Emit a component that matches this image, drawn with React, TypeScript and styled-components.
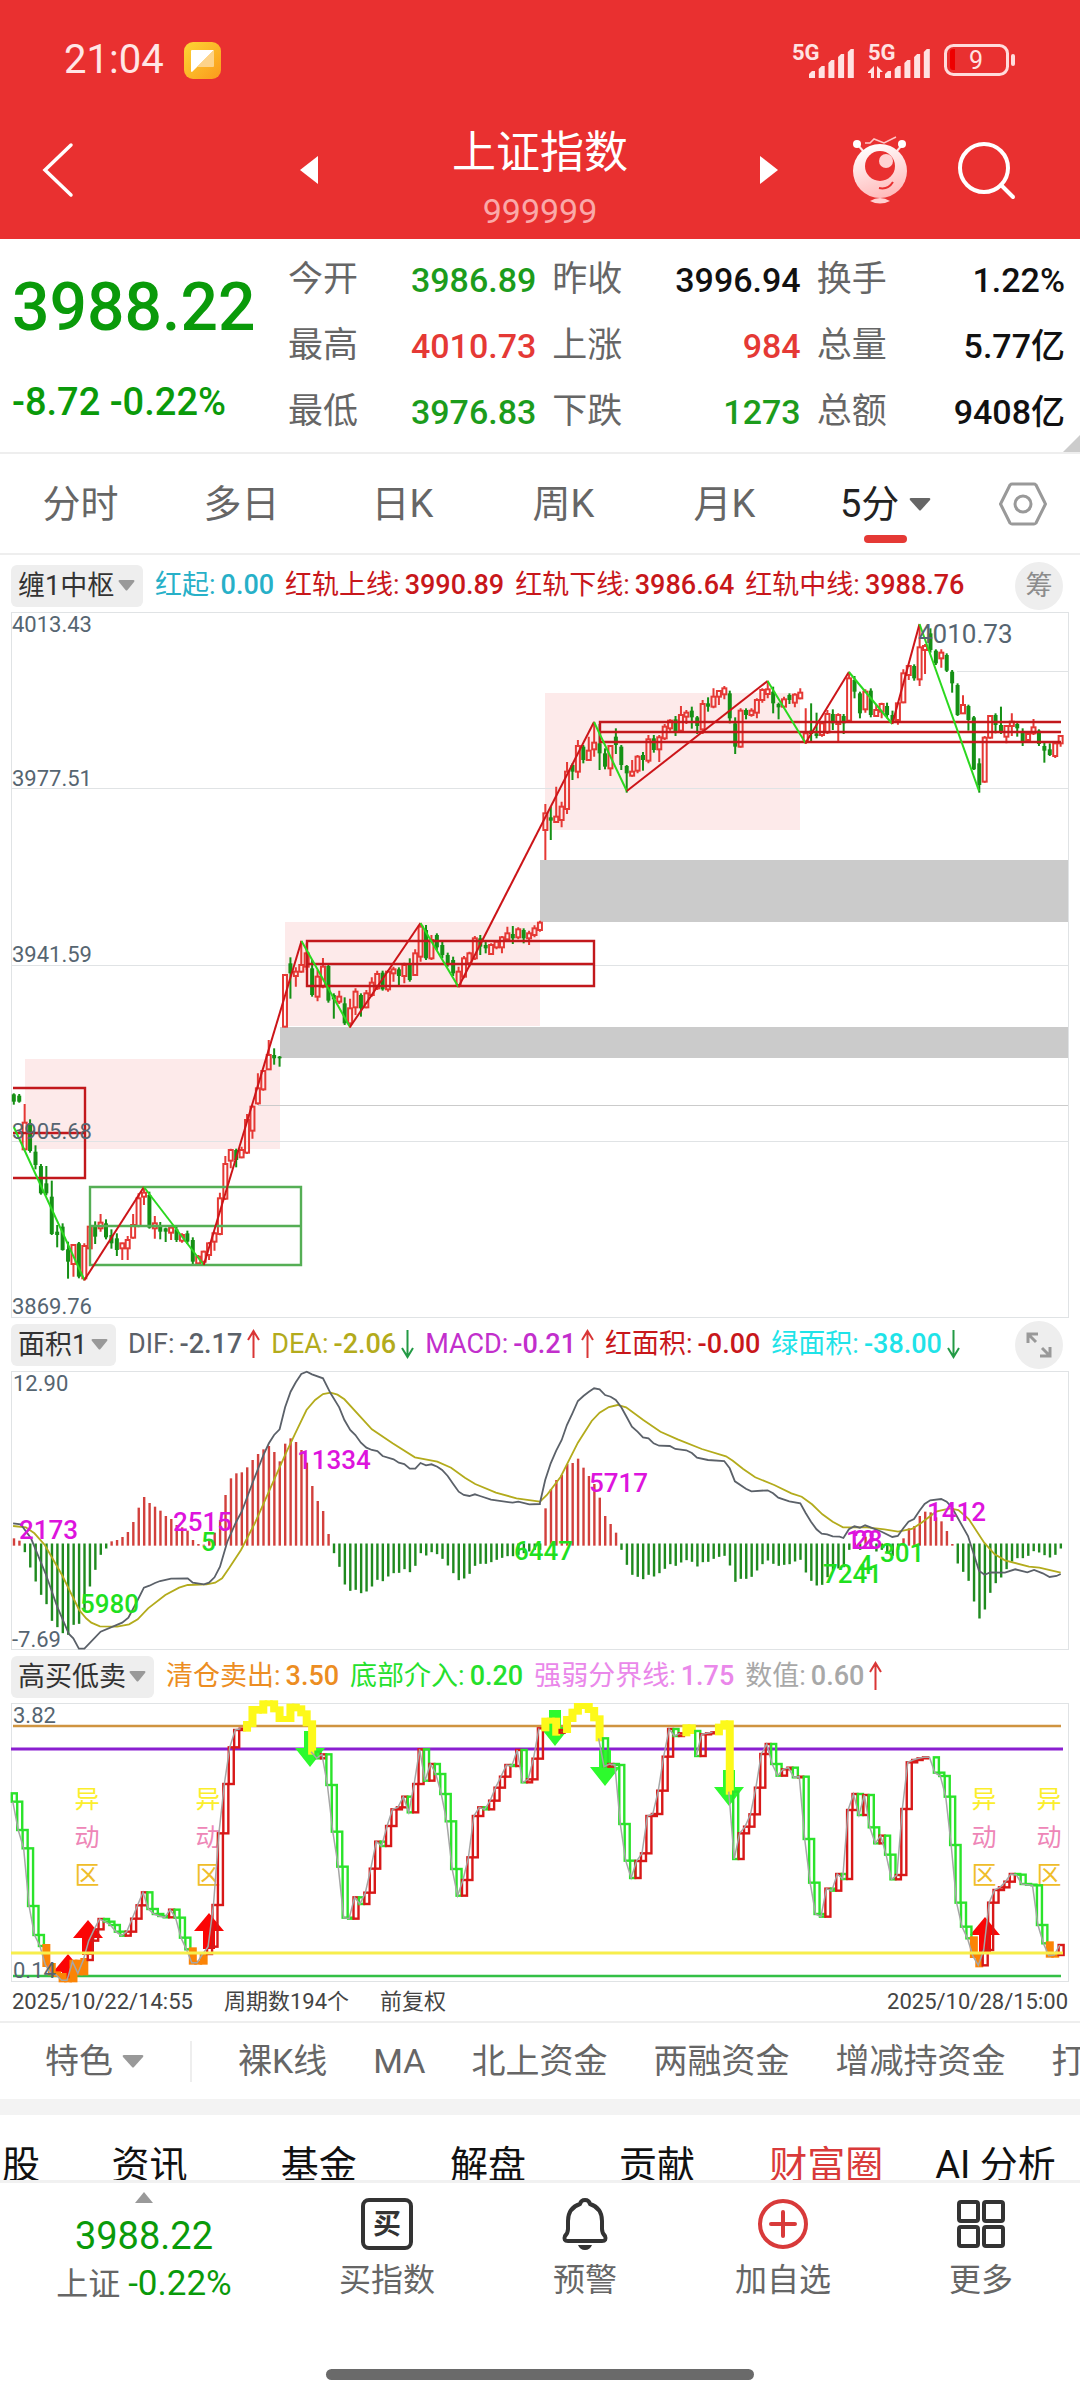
import React from "react";
import styled, { createGlobalStyle } from "styled-components";

const GlobalStyle = createGlobalStyle`
  * { box-sizing: border-box; }
  body {
    margin: 0;
    background: #fff;
    color: #666;
    font-family: Roboto, "Noto Sans CJK SC", sans-serif;
  }
  button, select {
    margin: 0;
    padding: 0;
    border: 0;
    background: none;
    color: inherit;
    font: inherit;
    line-height: inherit;
  }
  svg { display: block; flex: none; }
`;

const RED = "#e93030";
const UP = "#e53935";
const DOWN = "#159015";
const GREEN = "#0a9a0a";

/* ---------- layout ---------- */

const Page = styled.div`
  display: flex;
  flex-direction: column;
  min-height: 100vh;
  overflow-x: hidden;
`;

const Top = styled.header`
  background: ${RED};
  color: #fff;
`;

const StatusBar = styled.div`
  display: flex;
  align-items: center;
  justify-content: space-between;
  height: 92px;
  padding: 28px 64px 0;
`;

const StatusGroup = styled.div<{ $gap: number }>`
  display: flex;
  align-items: center;
  gap: ${(p) => p.$gap}px;
`;

const Clock = styled.span`
  font-size: 40px;
  line-height: 48px;
  color: #ffe6e6;
`;

const TitleBar = styled.div`
  display: grid;
  grid-template-columns: 1fr auto 1fr;
  align-items: center;
  height: 147px;
  padding: 8px 40px 0;
`;

const TitleSide = styled.div<{ $right?: boolean }>`
  display: flex;
  align-items: center;
  justify-content: space-between;
  padding-left: ${(p) => (p.$right ? "132px" : "0")};
  padding-right: ${(p) => (p.$right ? "24px" : "134px")};
`;

const TitleText = styled.div`
  display: flex;
  flex-direction: column;
  align-items: center;
  align-self: end;
`;

const Name = styled.h1`
  margin: 0;
  font-size: 44px;
  font-weight: 400;
  line-height: 60px;
`;

const Code = styled.span`
  font-size: 34px;
  line-height: 56px;
  color: #faa9a9;
`;

const IconButton = styled.button`
  display: flex;
  align-items: center;
  justify-content: center;
`;

const Actions = styled.div`
  display: flex;
  align-items: center;
  gap: 48px;
`;

const Quote = styled.section`
  position: relative;
  display: flex;
  height: 215px;
  padding: 8px 15px 0 12px;
  border-bottom: 2px solid #eee;
`;

const Corner = styled.svg`
  position: absolute;
  right: 0;
  bottom: 0;
`;

const Price = styled.div`
  flex: 0 0 276px;
  display: flex;
  flex-direction: column;
  color: ${GREEN};
  font-weight: 500;
`;

const Last = styled.strong`
  font-size: 66px;
  font-weight: 500;
  line-height: 122px;
`;

const Change = styled.span`
  font-size: 38px;
  line-height: 66px;
`;

const Stats = styled.dl`
  flex: 1;
  display: grid;
  grid-template-columns: repeat(3, 1fr);
  grid-auto-rows: 66px;
  column-gap: 16px;
  margin: 0;
`;

const Stat = styled.div`
  display: flex;
  justify-content: space-between;
  align-items: center;
  line-height: 66px;
`;

const StatName = styled.dt`
  font-size: 35px;
`;

const StatValue = styled.dd<{ $color: string }>`
  margin: 0;
  font-size: 34px;
  font-weight: 500;
  color: ${(p) => p.$color};
`;

const Periods = styled.nav`
  display: grid;
  grid-template-columns: repeat(5, 161px) 1fr 114px;
  align-items: stretch;
  height: 101px;
  border-bottom: 2px solid #eee;
  font-size: 38px;
  line-height: 48px;
`;

const Period = styled.button``;

const ActivePeriod = styled.div`
  display: flex;
  flex-direction: column;
  align-items: center;
  padding-top: 26px;
  color: #222;
`;

const Underline = styled.span`
  width: 43px;
  height: 8px;
  margin-top: 7px;
  border-radius: 4px;
  background: ${UP};
`;

const PickerBox = styled.label<{ $pill?: boolean }>`
  position: relative;
  display: inline-flex;
  align-items: center;
  height: ${(p) => (p.$pill ? "42px" : "48px")};
  padding-left: ${(p) => (p.$pill ? "7px" : "0")};
  border-radius: 6px;
  background: ${(p) => (p.$pill ? "#eee" : "none")};
`;

const PickerSelect = styled.select<{ $pill?: boolean }>`
  appearance: none;
  outline: none;
  padding-right: ${(p) => (p.$pill ? "28px" : "31px")};
  color: inherit;
`;

const PickerCaret = styled.svg<{ $pill?: boolean }>`
  position: absolute;
  right: ${(p) => (p.$pill ? "8px" : "0")};
  top: 0;
  bottom: 0;
  margin: auto 0;
  pointer-events: none;
`;

const IndicatorBar = styled.div<{ $first?: boolean }>`
  display: flex;
  align-items: center;
  height: ${(p) => (p.$first ? "57px" : "53px")};
  padding: ${(p) => (p.$first ? "4px 17px 0 11px" : "0 17px 0 11px")};
  font-size: 27px;
  line-height: 40px;
  color: #333;
`;

const Legend = styled.div`
  flex: 1;
  display: flex;
  gap: 11px;
  padding: 0 0 2px 12px;
  white-space: nowrap;
`;

const LegendItem = styled.span<{ $color: string }>`
  display: flex;
  align-items: center;
  gap: 5px;
  color: ${(p) => p.$color};
`;

const LegendValue = styled.span`
  font-weight: 500;
`;

const RoundButton = styled.button`
  display: flex;
  align-items: center;
  justify-content: center;
  width: 48px;
  height: 48px;
  border-radius: 50%;
  background: #eee;
  color: #8c8c8c;
`;

const Plot = styled.svg`
  width: calc(100% - 22px);
  height: auto;
  margin: 0 11px;
  overflow: visible;
  font-family: Roboto, "Noto Sans CJK SC", sans-serif;
`;

const DateRow = styled.div`
  display: flex;
  gap: 31px;
  height: 41px;
  padding: 0 12px;
  border-bottom: 2px solid #eee;
  font-size: 22px;
  line-height: 40px;
  color: #444;
`;

const EndDate = styled.time`
  margin-left: auto;
`;

const Features = styled.nav`
  display: flex;
  align-items: center;
  gap: 46px;
  height: 76px;
  padding-left: 45px;
  overflow: hidden;
  font-size: 34px;
  line-height: 48px;
  white-space: nowrap;
`;

const Divider = styled.span`
  flex: none;
  width: 2px;
  height: 41px;
  background: #eee;
`;

const Band = styled.div`
  height: 16px;
  background: #f3f3f3;
`;

const NewsTabs = styled.nav`
  display: grid;
  grid-template-columns: 65px repeat(6, 1fr);
  align-items: start;
  height: 68px;
  padding-top: 22px;
  overflow: hidden;
  border-bottom: 3px solid #f1f1f1;
  font-size: 38px;
  line-height: 56px;
  color: #111;
`;

const NewsTab = styled.button<{ $active?: boolean; $cut?: boolean }>`
  padding-left: ${(p) => (p.$cut ? "2px" : "0")};
  color: ${(p) => (p.$active ? "#d93a3a" : "inherit")};
  text-align: ${(p) => (p.$cut ? "left" : "center")};
  white-space: nowrap;
`;

const BottomBar = styled.footer`
  display: grid;
  grid-template-columns: 288fr repeat(4, 198fr);
  height: 130px;
  font-size: 32px;
  line-height: 40px;
`;

const IndexTicker = styled.button`
  display: flex;
  flex-direction: column;
  align-items: center;
  padding-top: 9px;
`;

const TickerPrice = styled.span`
  margin-top: 9px;
  font-size: 38px;
  line-height: 48px;
  color: ${GREEN};
`;

const TickerChange = styled.span`
  line-height: 48px;
`;

const Percent = styled.span`
  font-size: 35px;
  color: ${GREEN};
`;

const Action = styled.button`
  display: flex;
  flex-direction: column;
  align-items: center;
  gap: 10px;
  padding-top: 15px;
`;

const HomeIndicator = styled.div`
  width: 428px;
  height: 11px;
  margin: auto auto 20px;
  border-radius: 6px;
  background: #6a6a6a;
`;

/* ---------- chart data ---------- */

const sx = (i: number) => 13.8 + 5.424 * i;

type Candle = [string, number, number, number, number];

const parseCandles = (src: string, base: number): Candle[] =>
  src
    .trim()
    .split(/\s*,\s*/)
    .map((row) => {
      const [c, ...n] = row.split(" ");
      const [a, b, d, e] = n.map((v) => base + Number(v) / 3);
      return [c, a, b, d, e];
    });

/* colour, high, body top, body bottom, low */
const candles: Candle[] = [
  ...parseCandles(
    `g 400 403 425 434,g 402 407 425 428,r 432 488 568 570,g 478 490 573 578,g 556 575 615 628,g 612 618 700 704,
g 618 670 700 706,g 662 710 822 825,g 795 815 825 862,g 790 800 870 872,g 845 868 905 956,r 852 855 912 950,
g 846 850 950 955,r 850 858 955 962,r 800 800 865 868,g 784 800 830 852,r 762 788 805 815,g 778 790 832 838,
g 808 825 850 866,g 820 835 870 888,r 848 850 865 900,r 828 840 865 900,r 762 795 833 836,r 700 715 798 802,
r 682 698 710 735,g 695 705 803 806,r 768 790 805 836,g 786 795 815 838,g 803 805 815 846,r 798 803 818 840,
g 800 808 840 846,r 820 825 842 848,g 812 820 845 852,g 832 840 905 912,r 885 890 910 912,r 872 875 905 918,
r 846 850 885 900,r 815 820 845 872,r 698 715 822 826,r 588 612 716 720,r 566 570 602 625,g 566 570 600 622,
r 560 570 592 595,r 462 480 578 582,r 436 440 512 536,r 340 385 430 434,r 330 333 388 392,r 240 285 328 330,
g 265 285 295 314,g 288 290 295 320,r 42 45 200 202,g -8 10 40 116,r 22 35 48 80,r -58 15 35 38,
r -50 -20 20 30,g 0 25 105 110,r 30 50 110 124,r -6 20 80 85,g 12 18 122 128,g 100 105 118 176,
r 92 110 125 132,g 112 130 190 195,r 116 145 190 204,r 85 95 142 165,g 100 105 145 170,r 90 100 142 145,
r 52 68 105 110,r 32 42 85 90,g 32 38 88 92,r 30 35 88 95,r 20 28 40 65,g 22 28 48 76,
r 8 15 48 70,g -5 10 60 65,r -32 -20 45 48,r -110 -100 -10 5,g -105 -90 -5 0,r -75 -60 -5 0,
g -80 -75 -38 -30,g -55 -45 -15 -5,g -22 -15 10 20,g -10 0 40 48,r 20 35 75 82,r -12 -5 50 55,
r -25 -20 10 20,r -72 -65 -5 0,g -75 -65 -40 -15,g -60 -45 -35 -20,r -50 -45 -18 -15,r -60 -55 -38 -32,
r -72 -68 -38 -20,r -100 -80 -62 -55,g -102 -78 -65 -48,r -98 -92 -68 -62,g -95 -90 -65 -50,r -88 -80 -65 -45,
r -104 -95 -75 -68,r -118 -112 -90 -85`,
    960
  ),
  ...parseCandles(
    `r 612 640 690 780,g 620 652 662 720,r 560 650 666 668,r 605 620 660 682,r 486 515 627 642,g 490 495 515 540,
r 420 438 515 535,g 435 440 480 490,r 410 452 480 482,r 365 428 448 470,g 372 430 460 510,g 445 460 500 508,
r 435 438 505 528,g 385 410 435 462,g 435 440 495 510,g 495 498 520 578,r 480 515 527 530,r 465 470 512 520,
g 456 465 480 512,r 405 418 482 490,g 405 415 450 458,r 405 412 448 486,r 372 380 415 420,r 358 362 385 392,
g 348 358 395 408,r 318 345 392 398,r 330 338 350 372,g 320 332 352 386,g 348 352 378 402,r 300 312 388 402,
g 292 310 320 335,r 265 290 320 325,r 270 273 290 315,r 258 265 283 298,g 272 280 355 370,g 352 370 440 462,
r 325 332 440 443,g 325 330 345 358,r 325 332 345 350,r 295 300 338 355,r 265 270 300 308,r 242 268 282 295,
g 260 275 310 340,g 308 312 322 358,r 290 298 320 325,g 280 285 300 312,r 280 284 308 322,r 265 278 295 298,
r 325 400 425 432,g 310 392 402 425,g 338 400 408 415,r 365 370 405 410,r 330 342 397 402,g 328 342 370 390,
r 340 345 372 425,g 342 348 370 402,r 215 235 362 365,g 228 240 275 295,g 275 280 340 355,r 268 275 328 338,
g 265 272 345 352,r 315 330 348 350,r 308 312 335 355,g 308 318 345 355,g 332 345 362 370,r 308 310 360 374,
r 208 220 307 310,r 195 198 225 240,g 193 198 235 242,r 75 142 238 258,r 132 138 150 222,g 85 100 150 158,
g 148 152 190 195,r 148 158 175 203,g 160 165 212 216,g 210 215 250 278,g 250 255 345 348,r 286 315 340 342,
g 314 318 360 392,g 348 352 508 510,g 475 490 555 578,r 408 413 545 548,r 345 348 413 416,g 340 345 375 400,
g 320 375 395 402,r 375 378 410 430,r 340 365 378 408,g 365 372 385 410,g 385 395 425 438,r 398 402 420 425,
r 357 382 400 405,g 388 392 432 438,g 428 438 452 488,g 430 448 465 468,r 428 430 468 474,r 405 408 430 440`,
    600
  ),
];

const zigzag: [number, number][] = [
  [13.8, 1127], [84.4, 1280], [143.9, 1187], [203.8, 1265], [301.5, 941], [350, 1027],
  [420.5, 923], [458.5, 987], [594, 722], [626.8, 791], [767.6, 681], [805.5, 743],
  [848.9, 672], [892.3, 724], [919.5, 624], [979, 791],
];

/* bar tips; anything past 672 hangs below the zero line */
const macd =
  `655 662 697 743 785 825 853 903 922 940 945 915 912 870 800 750 705 686 664 660 651 636 606 563 531 549 560 572 588 597
615 622 632 660 672 674 663 638 600 525 475 460 457 442 420 402 388 378 396 424 371 355 366 390 428 498 543 573 642 700
741 794 813 810 820 815 800 780 784 770 760 759 748 757 738 700 707 697 703 717 737 760 781 776 762 738 732 732 727 720
714 709 709 705 700 695 690 690 565 507 480 465 432 429 416 443 468 492 533 588 612 638 690 735 765 771 778 765 770 760
747 733 738 728 721 726 740 727 726 717 711 708 737 786 777 777 771 752 733 722 732 738 735 733 725 720 758 783 797 795
772 751 746 742 690 668 690 650 686 695 690 700 708 690 655 625 618 588 575 577 592 604 633 672 731 756 783 845 896 869
819 790 773 748 725 715 715 708 694 698 706 713 705 686`
    .split(/\s+/)
    .map(Number);

const trace = (left: string, right: string) => {
  const conv = (s: string, ox: number) =>
    s.split(" ").map((p) => {
      const [x, y] = p.split(",").map(Number);
      return `${(ox + x / 2.904).toFixed(1)},${(1320 + y / 3).toFixed(1)}`;
    });
  return [...conv(left, 0), ...conv(right, 540)].join(" ");
};

const dif = trace(
  "38,610 60,613 90,655 134,765 166,860 200,942 213,955 229,986 245,986 292,935 355,908 373,893 400,840 418,803 434,797 450,789 465,783 497,776 545,775 560,788 592,793 607,788 623,772 639,740 660,665 686,605 702,575 733,490 765,405 781,370 796,345 812,328 828,262 844,215 859,187 875,162 891,155 906,163 938,175 960,220 985,262 1000,300 1017,330 1032,345 1048,368 1064,383 1080,390 1096,393 1111,408 1143,418 1158,428 1174,432 1190,446 1206,446 1221,429 1237,436 1253,433 1270,440 1284,450 1300,468 1316,492 1332,515 1347,525 1363,528 1379,523 1394,528 1426,539 1489,548 1505,545 1537,553 1568,552",
  "0,548 15,480 31,430 47,392 63,360 78,315 94,280 110,243 126,228 142,215 157,205 173,208 189,225 205,230 220,240 236,262 252,292 267,320 283,335 299,352 315,355 330,370 346,377 377,378 393,387 425,391 441,399 456,413 488,420 535,423 551,445 566,484 598,506 614,514 661,511 677,520 692,533 724,544 756,550 771,578 787,605 803,628 818,641 834,643 850,649 870,650 881,654 897,628 913,619 929,623 944,616 960,622 992,635 1023,651 1039,648 1055,625 1070,605 1086,597 1102,572 1117,552 1133,541 1165,537 1181,545 1196,562 1212,592 1243,648 1259,700 1275,752 1291,764 1307,757 1350,758 1380,748 1415,757 1435,750 1460,760 1480,771 1500,768 1512,762"
);

const dea = trace(
  "38,618 75,622 100,640 130,675 180,765 230,870 250,895 265,908 290,919 340,920 375,913 400,898 430,865 480,825 520,803 545,795 600,793 625,788 645,775 665,745 700,690 740,610 800,470 830,400 860,335 890,270 915,240 938,222 960,218 980,224 1000,238 1080,328 1140,370 1205,412 1270,425 1310,443 1350,473 1380,492 1440,518 1500,535 1568,545",
  "0,545 20,525 60,470 110,368 150,303 173,278 200,261 225,255 250,262 300,300 350,335 400,358 470,387 540,409 560,422 590,447 625,472 680,495 730,520 760,530 790,553 820,583 850,605 880,622 950,622 1000,628 1040,635 1080,627 1110,607 1150,575 1190,565 1215,570 1245,597 1290,668 1320,702 1350,721 1420,740 1450,743 1512,758"
);

const areaLabels: [string, number, number, string][] = [
  ["2173", 19, 1539, "#dd14dd"], ["2515", 173, 1531, "#dd14dd"], ["11334", 297, 1469, "#dd14dd"],
  ["5", 201, 1551, "#1fe01f"], ["5980", 80, 1613, "#1fe01f"], ["6447", 514, 1560, "#1fe01f"],
  ["5717", 589, 1492, "#dd14dd"], ["12", 846, 1549, "#dd14dd"], ["28", 853, 1549, "#dd14dd"],
  ["1412", 927, 1521, "#dd14dd"], ["7241", 823, 1583, "#1fe01f"], ["4", 858, 1574, "#1fe01f"],
  ["301", 880, 1562, "#1fe01f"],
];

const swing =
  `455 540 595 768 855 888 945 970 975 991 991 935 970 930 872 838 807 815 825 845 857 845 806 766 727 777 792 798 802 779
803 863 898 938 938 912 890 765 550 402 292 240 236 222 177 182 160 160 178 207 207 170 175 190 220 305 325 313 405 545
650 803 806 742 762 728 656 575 588 528 478 472 440 487 402 298 392 342 372 432 514 657 737 690 622 498 472 478 452 413
380 345 348 300 397 388 326 235 212 212 248 240 207 185 168 168 180 205 265 350 342 345 522 632 684 633 610 498 492 422
320 237 258 250 232 243 318 253 250 247 230 220 425 627 550 530 493 413 312 282 342 377 358 353 382 380 567 698 792 800
716 722 672 687 480 432 495 435 532 580 557 614 688 675 477 337 330 325 322 322 368 378 440 585 758 830 865 918 946 900
758 720 712 695 672 674 702 704 706 825 880 917 915 885`
    .split(/\s+/)
    .map(Number);

const wy = (v: number) => 1650 + v / 3;

/* stretches of the swing line between the yellow runs */
const swingRuns = [[0, 42], [55, 97], [108, 123], [126, 129], [132, 193]];

/* centre, tip, shaft length */
const buyArrows = [[88, 1920, 17], [209, 1913, 18], [68, 1954, 8], [985, 1917, 18]];
const sellArrows = [[310, 1731], [555, 1710], [605, 1750], [729, 1770]];

/* ---------- charts ---------- */

const axis = { fontSize: 22, fill: "#566571" };

function PriceChart() {
  return (
    <Plot viewBox="11 612 1058 706" role="img" aria-label="5分钟K线">
      <g fill="#fdeaea">
        <rect x="25" y="1059" width="255" height="90" />
        <rect x="285" y="922" width="255" height="104" />
        <rect x="545" y="693" width="255" height="137" />
      </g>
      <g fill="#cbcbcb">
        <rect x="280" y="1027" width="789" height="31" />
        <rect x="540" y="860" width="529" height="62" />
        <rect x="258" y="1105" width="811" height="1" />
      </g>
      <g stroke="#e0e3e5" fill="none">
        <rect x="11.5" y="612.5" width="1057" height="705" />
        <path d="M11 788.5H1069M11 965.5H1069M11 1141.5H1069M957 671.5H1069" />
      </g>
      {candles.map(([c, hi, top, bot, lo], i) => {
        const x = sx(i);
        return c === "r" ? (
          <g key={i} stroke={UP} strokeWidth="2" fill="none">
            <path d={`M${x} ${hi}V${top}M${x} ${bot}V${lo}`} />
            <rect x={x - 2} y={top} width="4" height={Math.max(bot - top, 1)} />
          </g>
        ) : (
          <g key={i} fill={DOWN}>
            <rect x={x - 1} y={hi} width="2" height={lo - hi} />
            <rect x={x - 2} y={top} width="4" height={bot - top} />
          </g>
        );
      })}
      <g stroke="#c2181c" strokeWidth="2.4" fill="none">
        <path d="M13 1088H85V1178H13M13 1133H85" />
        <path d="M307 941H594V986H307ZM306 964H594" />
        <path d="M1061 722H600V742H1061M600 732H1061" />
      </g>
      <path d="M90 1187H301V1265H90ZM90 1226H301" stroke="#55ae55" strokeWidth="2.4" fill="none" />
      {zigzag.slice(1).map(([x, y], i) => (
        <path
          key={i}
          d={`M${zigzag[i][0]} ${zigzag[i][1]}L${x} ${y}`}
          stroke={i % 2 ? "#cc1519" : "#2bd81f"}
          strokeWidth="2"
        />
      ))}
      <g {...axis}>
        <text x="12" y="632">4013.43</text>
        <text x="12" y="786">3977.51</text>
        <text x="12" y="962">3941.59</text>
        <text x="12" y="1139">3905.68</text>
        <text x="12" y="1314">3869.76</text>
        <text x="918" y="643" fontSize="26">4010.73</text>
      </g>
    </Plot>
  );
}

function AreaChart() {
  return (
    <Plot viewBox="11 1371 1058 279" role="img" aria-label="面积指标">
      <rect x="11.5" y="1371.5" width="1057" height="278" fill="none" stroke="#e0e3e5" />
      {macd.map((v, i) =>
        v < 676 ? (
          <rect key={i} x={sx(i) - 1} y={1320 + v / 3} width="2.4" height={(677 - v) / 3} fill="#d2403c" />
        ) : (
          <rect key={i} x={sx(i) - 1} y={1543.5} width="2.4" height={(v - 671) / 3} fill="#1f8a1f" />
        )
      )}
      <polyline points={dea} fill="none" stroke="#b3ab1c" strokeWidth="1.8" />
      <polyline points={dif} fill="none" stroke="#5b6169" strokeWidth="1.8" />
      <g {...axis}>
        <text x="13" y="1391">12.90</text>
        <text x="12" y="1647">-7.69</text>
      </g>
      <g fontSize="26" fontWeight="500">
        {areaLabels.map(([t, x, y, fill]) => (
          <text key={t + x} x={x} y={y} fill={fill}>{t}</text>
        ))}
      </g>
    </Plot>
  );
}

function SwingChart() {
  return (
    <Plot viewBox="11 1703 1058 279" role="img" aria-label="高买低卖指标">
      <rect x="11.5" y="1703.5" width="1057" height="278" fill="none" stroke="#e0e3e5" />
      <path d="M13 1726H1061" stroke="#cf9440" strokeWidth="2.4" />
      <path d="M11 1749H1063" stroke="#8a1fd0" strokeWidth="3" />
      <path d="M13 1976H1061" stroke="#33c046" strokeWidth="2.4" />
      {sellArrows.map(([x, y]) => (
        <path key={x} d={`M${x - 6} ${y}h12v17h9l-15 19l-15 -19h9z`} fill="#2dfa2d" />
      ))}
      {buyArrows.map(([x, y, n]) => (
        <path key={x} d={`M${x} ${y}l15 18h-9v${n}h-12v${-n}h-9z`} fill="#fb0505" />
      ))}
      <g fontSize="25" textAnchor="middle">
        {[87, 208, 984, 1049].map((x) => (
          <React.Fragment key={x}>
            <text x={x} y="1808" fill="#fbee2c">异</text>
            <text x={x} y="1846" fill="#ee86b7">动</text>
            <text x={x} y="1884" fill="#efbd2a">区</text>
          </React.Fragment>
        ))}
      </g>
      {swing.map((v, i) => {
        const prev = i ? swing[i - 1] : 430;
        const top = wy(Math.min(v, prev));
        const h = Math.abs(v - prev) / 3;
        const x = sx(i);
        if (v < 235 || prev < 235)
          return <rect key={i} x={x - 4} y={top - 3} width="8" height={h + 6} fill="#fdf91a" />;
        if (v >= 905)
          return <rect key={i} x={x - 4} y={top - 2} width="8" height={h + 4} fill="#fb8406" />;
        return (
          <rect key={i} x={x - 2} y={top} width="5" height={h} fill="none" stroke={v < prev ? "#d81818" : "#2be32b"} strokeWidth="2.4" />
        );
      })}
      {swingRuns.map(([a, b]) => (
        <polyline
          key={a}
          points={swing.slice(a, b + 1).map((v, k) => `${sx(a + k) - 1},${wy(v)}`).join(" ")}
          fill="none" stroke="#a6a6a6" strokeWidth="1.5"
        />
      ))}
      <path d="M11 1953H1063" stroke="#f7ee4c" strokeWidth="3" />
      <g {...axis}>
        <text x="13" y="1723">3.82</text>
        <text x="13" y="1978">0.14</text>
      </g>
    </Plot>
  );
}

/* ---------- small parts ---------- */

function Picker({ label, value, pill, color = "#999" }: { label: string; value: string; pill?: boolean; color?: string }) {
  return (
    <PickerBox $pill={pill}>
      <PickerSelect $pill={pill} aria-label={label} defaultValue={value}>
        <option>{value}</option>
      </PickerSelect>
      <PickerCaret $pill={pill} width={pill ? 17 : 22} height={pill ? 11 : 13} viewBox="0 0 22 13" preserveAspectRatio="none">
        <path d="M2 0h18q2 0 1 2L12 12q-1 1-2 0L1 2Q0 0 2 0z" fill={color} />
      </PickerCaret>
    </PickerBox>
  );
}

function Arrow({ up }: { up?: boolean }) {
  return (
    <svg width="13" height="30" viewBox="0 0 13 30" fill="none" stroke={up ? "#d93636" : "#239a45"} strokeWidth="2">
      <path d={up ? "M6.5 29V2M1 11L6.5 2L12 11" : "M6.5 1V28M1 19L6.5 28L12 19"} />
    </svg>
  );
}

type Entry = { name: string; value: string; color: string; dir?: "up" | "down" };

function Entries({ items }: { items: Entry[] }) {
  return (
    <Legend>
      {items.map((e) => (
        <LegendItem key={e.name} $color={e.color}>
          {e.name}:<LegendValue>{e.value}</LegendValue>
          {e.dir && <Arrow up={e.dir === "up"} />}
        </LegendItem>
      ))}
    </Legend>
  );
}

function Signal({ data }: { data?: boolean }) {
  return (
    <svg width="62" height="40" viewBox="0 -4 62 40" fill="#ffe2e2">
      <text x="0" y="16" fontSize="22" fontWeight="700" fontFamily="Roboto, sans-serif">5G</text>
      {[7, 12, 18, 24, 29].map((h, i) => (
        <path key={h} d={`M${17 + i * 9.7} ${34 - h + 3}l3 -3h3v${h}h-6z`} />
      ))}
      {data && <path d="M6 22v12h-3v-5H-1zM9 34v-12l6 6h-3v6z" />}
    </svg>
  );
}

const stats: [string, string, string][] = [
  ["今开", "3986.89", "#1c9c1c"], ["昨收", "3996.94", "#111"], ["换手", "1.22%", "#111"],
  ["最高", "4010.73", UP], ["上涨", "984", UP], ["总量", "5.77亿", "#111"],
  ["最低", "3976.83", "#1c9c1c"], ["下跌", "1273", "#1c9c1c"], ["总额", "9408亿", "#111"],
];

export default function App() {
  return (
    <Page>
      <GlobalStyle />
      <Top>
        <StatusBar>
          <StatusGroup $gap={20}>
            <Clock>21:04</Clock>
            <svg width="37" height="37" viewBox="0 0 37 37">
              <defs>
                <linearGradient id="note" x1="0" y1="0" x2="1" y2="1">
                  <stop offset="0" stopColor="#fdd535" />
                  <stop offset="1" stopColor="#fb9a1c" />
                </linearGradient>
              </defs>
              <rect width="37" height="37" rx="9" fill="url(#note)" />
              <path d="M7 9q0-1 1-1h22L8 30q-1 0-1-1z" fill="#fff" />
              <path d="M30 8v16q0 1-1 1H13z" fill="#fdd38a" />
            </svg>
          </StatusGroup>
          <StatusGroup $gap={14}>
            <Signal />
            <Signal data />
            <svg width="72" height="32" viewBox="0 0 72 32">
              <rect x="1.5" y="1.5" width="62" height="29" rx="8" fill="none" stroke="#ffdcdc" strokeWidth="3" />
              <path d="M11 5v21H9q-3 0-3-3V8q0-3 3-3z" fill="#e00" />
              <rect x="67" y="10" width="4" height="12" rx="2" fill="#ffdcdc" />
              <text x="32" y="25" fontSize="25" fill="#ffe2e2" textAnchor="middle">9</text>
            </svg>
          </StatusGroup>
        </StatusBar>
        <TitleBar>
          <TitleSide>
            <IconButton aria-label="返回">
              <svg width="34" height="56" viewBox="0 0 34 56" fill="none" stroke="#fff" strokeWidth="3.5" strokeLinecap="round">
                <path d="M31 3L5 28L31 53" />
              </svg>
            </IconButton>
            <IconButton aria-label="上一个">
              <svg width="18" height="28"><path d="M18 0V28L0 14z" fill="#fff" /></svg>
            </IconButton>
          </TitleSide>
          <TitleText>
            <Name>上证指数</Name>
            <Code>999999</Code>
          </TitleText>
          <TitleSide $right>
            <IconButton aria-label="下一个">
              <svg width="18" height="28"><path d="M0 0V28L18 14z" fill="#fff" /></svg>
            </IconButton>
            <Actions>
              <IconButton aria-label="智能助手">
                <svg width="56" height="68" viewBox="0 0 56 68">
                  <defs>
                    <linearGradient id="bot" x1="0.3" y1="0" x2="0.6" y2="1">
                      <stop offset="0" stopColor="#fff" />
                      <stop offset="1" stopColor="#ffb9b9" />
                    </linearGradient>
                  </defs>
                  <path d="M5 8L12 16M51 8L44 16" stroke="#ffe3e3" strokeWidth="2" />
                  <circle cx="5" cy="8" r="4" fill="#fff" />
                  <circle cx="50" cy="8" r="4" fill="#fff" />
                  <path d="M13 7h5l4-4L32 7L44 1" fill="none" stroke="#ffc6c6" strokeWidth="1.5" />
                  <circle cx="28" cy="35" r="27" fill="url(#bot)" />
                  <circle cx="28" cy="30" r="15" fill={RED} />
                  <circle cx="34" cy="25" r="7" fill="#ffd2d2" />
                  <path d="M27 52q9 2 14-6" fill="none" stroke={RED} strokeWidth="2" />
                  <path d="M18 65q10-6 20 0q-10 5-20 0z" fill="#ffd0d0" />
                </svg>
              </IconButton>
              <IconButton aria-label="搜索">
                <svg width="60" height="60" viewBox="0 0 60 60" fill="none" stroke="#fff" strokeWidth="4" strokeLinecap="round">
                  <circle cx="28" cy="28" r="24" />
                  <path d="M45 45L57 57" />
                </svg>
              </IconButton>
            </Actions>
          </TitleSide>
        </TitleBar>
      </Top>

      <Quote>
        <Price>
          <Last>3988.22</Last>
          <Change>-8.72 -0.22%</Change>
        </Price>
        <Stats>
          {stats.map(([n, v, c]) => (
            <Stat key={n}>
              <StatName>{n}</StatName>
              <StatValue $color={c}>{v}</StatValue>
            </Stat>
          ))}
        </Stats>
        <Corner width="17" height="17"><path d="M17 0V17H0z" fill="#ccc" /></Corner>
      </Quote>

      <Periods>
        {["分时", "多日", "日K", "周K", "月K"].map((p) => (
          <Period key={p}>{p}</Period>
        ))}
        <ActivePeriod>
          <Picker label="分钟周期" value="5分" color="#666" />
          <Underline />
        </ActivePeriod>
        <IconButton aria-label="设置">
          <svg width="48" height="44" viewBox="0 0 48 44" fill="none" stroke="#999" strokeWidth="3">
            <path d="M13 2h22q1 0 2 1l9 18q1 1 0 2l-9 18q-1 1-2 1H13q-1 0-2-1L2 23q-1-1 0-2l9-18q1-1 2-1z" />
            <circle cx="24" cy="22" r="8" />
          </svg>
        </IconButton>
      </Periods>

      <IndicatorBar $first>
        <Picker pill label="主图指标" value="缠1中枢" />
        <Entries
          items={[
            { name: "红起", value: "0.00", color: "#27b0c8" },
            { name: "红轨上线", value: "3990.89", color: "#c8171b" },
            { name: "红轨下线", value: "3986.64", color: "#c8171b" },
            { name: "红轨中线", value: "3988.76", color: "#c8171b" },
          ]}
        />
        <RoundButton>筹</RoundButton>
      </IndicatorBar>
      <PriceChart />

      <IndicatorBar>
        <Picker pill label="副图一指标" value="面积1" />
        <Entries
          items={[
            { name: "DIF", value: "-2.17", color: "#5b6169", dir: "up" },
            { name: "DEA", value: "-2.06", color: "#b3ab1c", dir: "down" },
            { name: "MACD", value: "-0.21", color: "#c22fcc", dir: "up" },
            { name: "红面积", value: "-0.00", color: "#c8171b" },
            { name: "绿面积", value: "-38.00", color: "#1fe3e8", dir: "down" },
          ]}
        />
        <RoundButton aria-label="展开">
          <svg width="26" height="26" viewBox="0 0 26 26" fill="none" stroke="#999" strokeWidth="3">
            <path d="M2 11V2H12M2 2L10 10M24 15V24H14M24 24L16 16" />
          </svg>
        </RoundButton>
      </IndicatorBar>
      <AreaChart />

      <IndicatorBar>
        <Picker pill label="副图二指标" value="高买低卖" />
        <Entries
          items={[
            { name: "清仓卖出", value: "3.50", color: "#ec8d22" },
            { name: "底部介入", value: "0.20", color: "#25e02c" },
            { name: "强弱分界线", value: "1.75", color: "#ea88ea" },
            { name: "数值", value: "0.60", color: "#a8a8a8", dir: "up" },
          ]}
        />
      </IndicatorBar>
      <SwingChart />

      <DateRow>
        <time>2025/10/22/14:55</time>
        <span>周期数194个</span>
        <span>前复权</span>
        <EndDate>2025/10/28/15:00</EndDate>
      </DateRow>

      <Features>
        <Picker label="特色指标" value="特色" />
        <Divider />
        {["裸K线", "MA", "北上资金", "两融资金", "增减持资金", "打板资金"].map((f) => (
          <button key={f}>{f}</button>
        ))}
      </Features>
      <Band />

      <NewsTabs>
        <NewsTab $cut>股</NewsTab>
        {["资讯", "基金", "解盘", "贡献"].map((t) => (
          <NewsTab key={t}>{t}</NewsTab>
        ))}
        <NewsTab $active>财富圈</NewsTab>
        <NewsTab>AI 分析</NewsTab>
      </NewsTabs>

      <BottomBar>
        <IndexTicker>
          <svg width="18" height="11"><path d="M9 0L18 11H0z" fill="#999" /></svg>
          <TickerPrice>3988.22</TickerPrice>
          <TickerChange>上证 <Percent>-0.22%</Percent></TickerChange>
        </IndexTicker>
        <Action>
          <svg width="52" height="52" viewBox="0 0 52 52">
            <rect x="2" y="2" width="48" height="48" rx="6" fill="none" stroke="#333" strokeWidth="4" />
            <text x="26" y="36" fontSize="28" fontWeight="700" textAnchor="middle" fill="#333">买</text>
          </svg>
          买指数
        </Action>
        <Action>
          <svg width="48" height="52" viewBox="0 0 48 52">
            <path d="M24 2q4 0 5 4q12 4 12 17v8q0 4 3 7q2 5-3 5H7q-5 0-3-5q3-3 3-7v-8q0-13 12-17q1-4 5-4z" fill="none" stroke="#333" strokeWidth="4" strokeLinejoin="round" />
            <path d="M17 47h14q-2 5-7 5t-7-5z" fill="#333" />
          </svg>
          预警
        </Action>
        <Action>
          <svg width="52" height="52" viewBox="0 0 52 52" fill="none" stroke="#d83a3a" strokeWidth="4" strokeLinecap="round">
            <circle cx="26" cy="26" r="23" />
            <path d="M26 14V38M14 26H38" />
          </svg>
          加自选
        </Action>
        <Action>
          <svg width="52" height="52" viewBox="0 0 52 52" fill="none" stroke="#333" strokeWidth="4">
            <rect x="4" y="4" width="19" height="19" rx="2" />
            <rect x="29" y="4" width="19" height="19" rx="2" />
            <rect x="4" y="29" width="19" height="19" rx="2" />
            <rect x="29" y="29" width="19" height="19" rx="2" />
          </svg>
          更多
        </Action>
      </BottomBar>
      <HomeIndicator />
    </Page>
  );
}
